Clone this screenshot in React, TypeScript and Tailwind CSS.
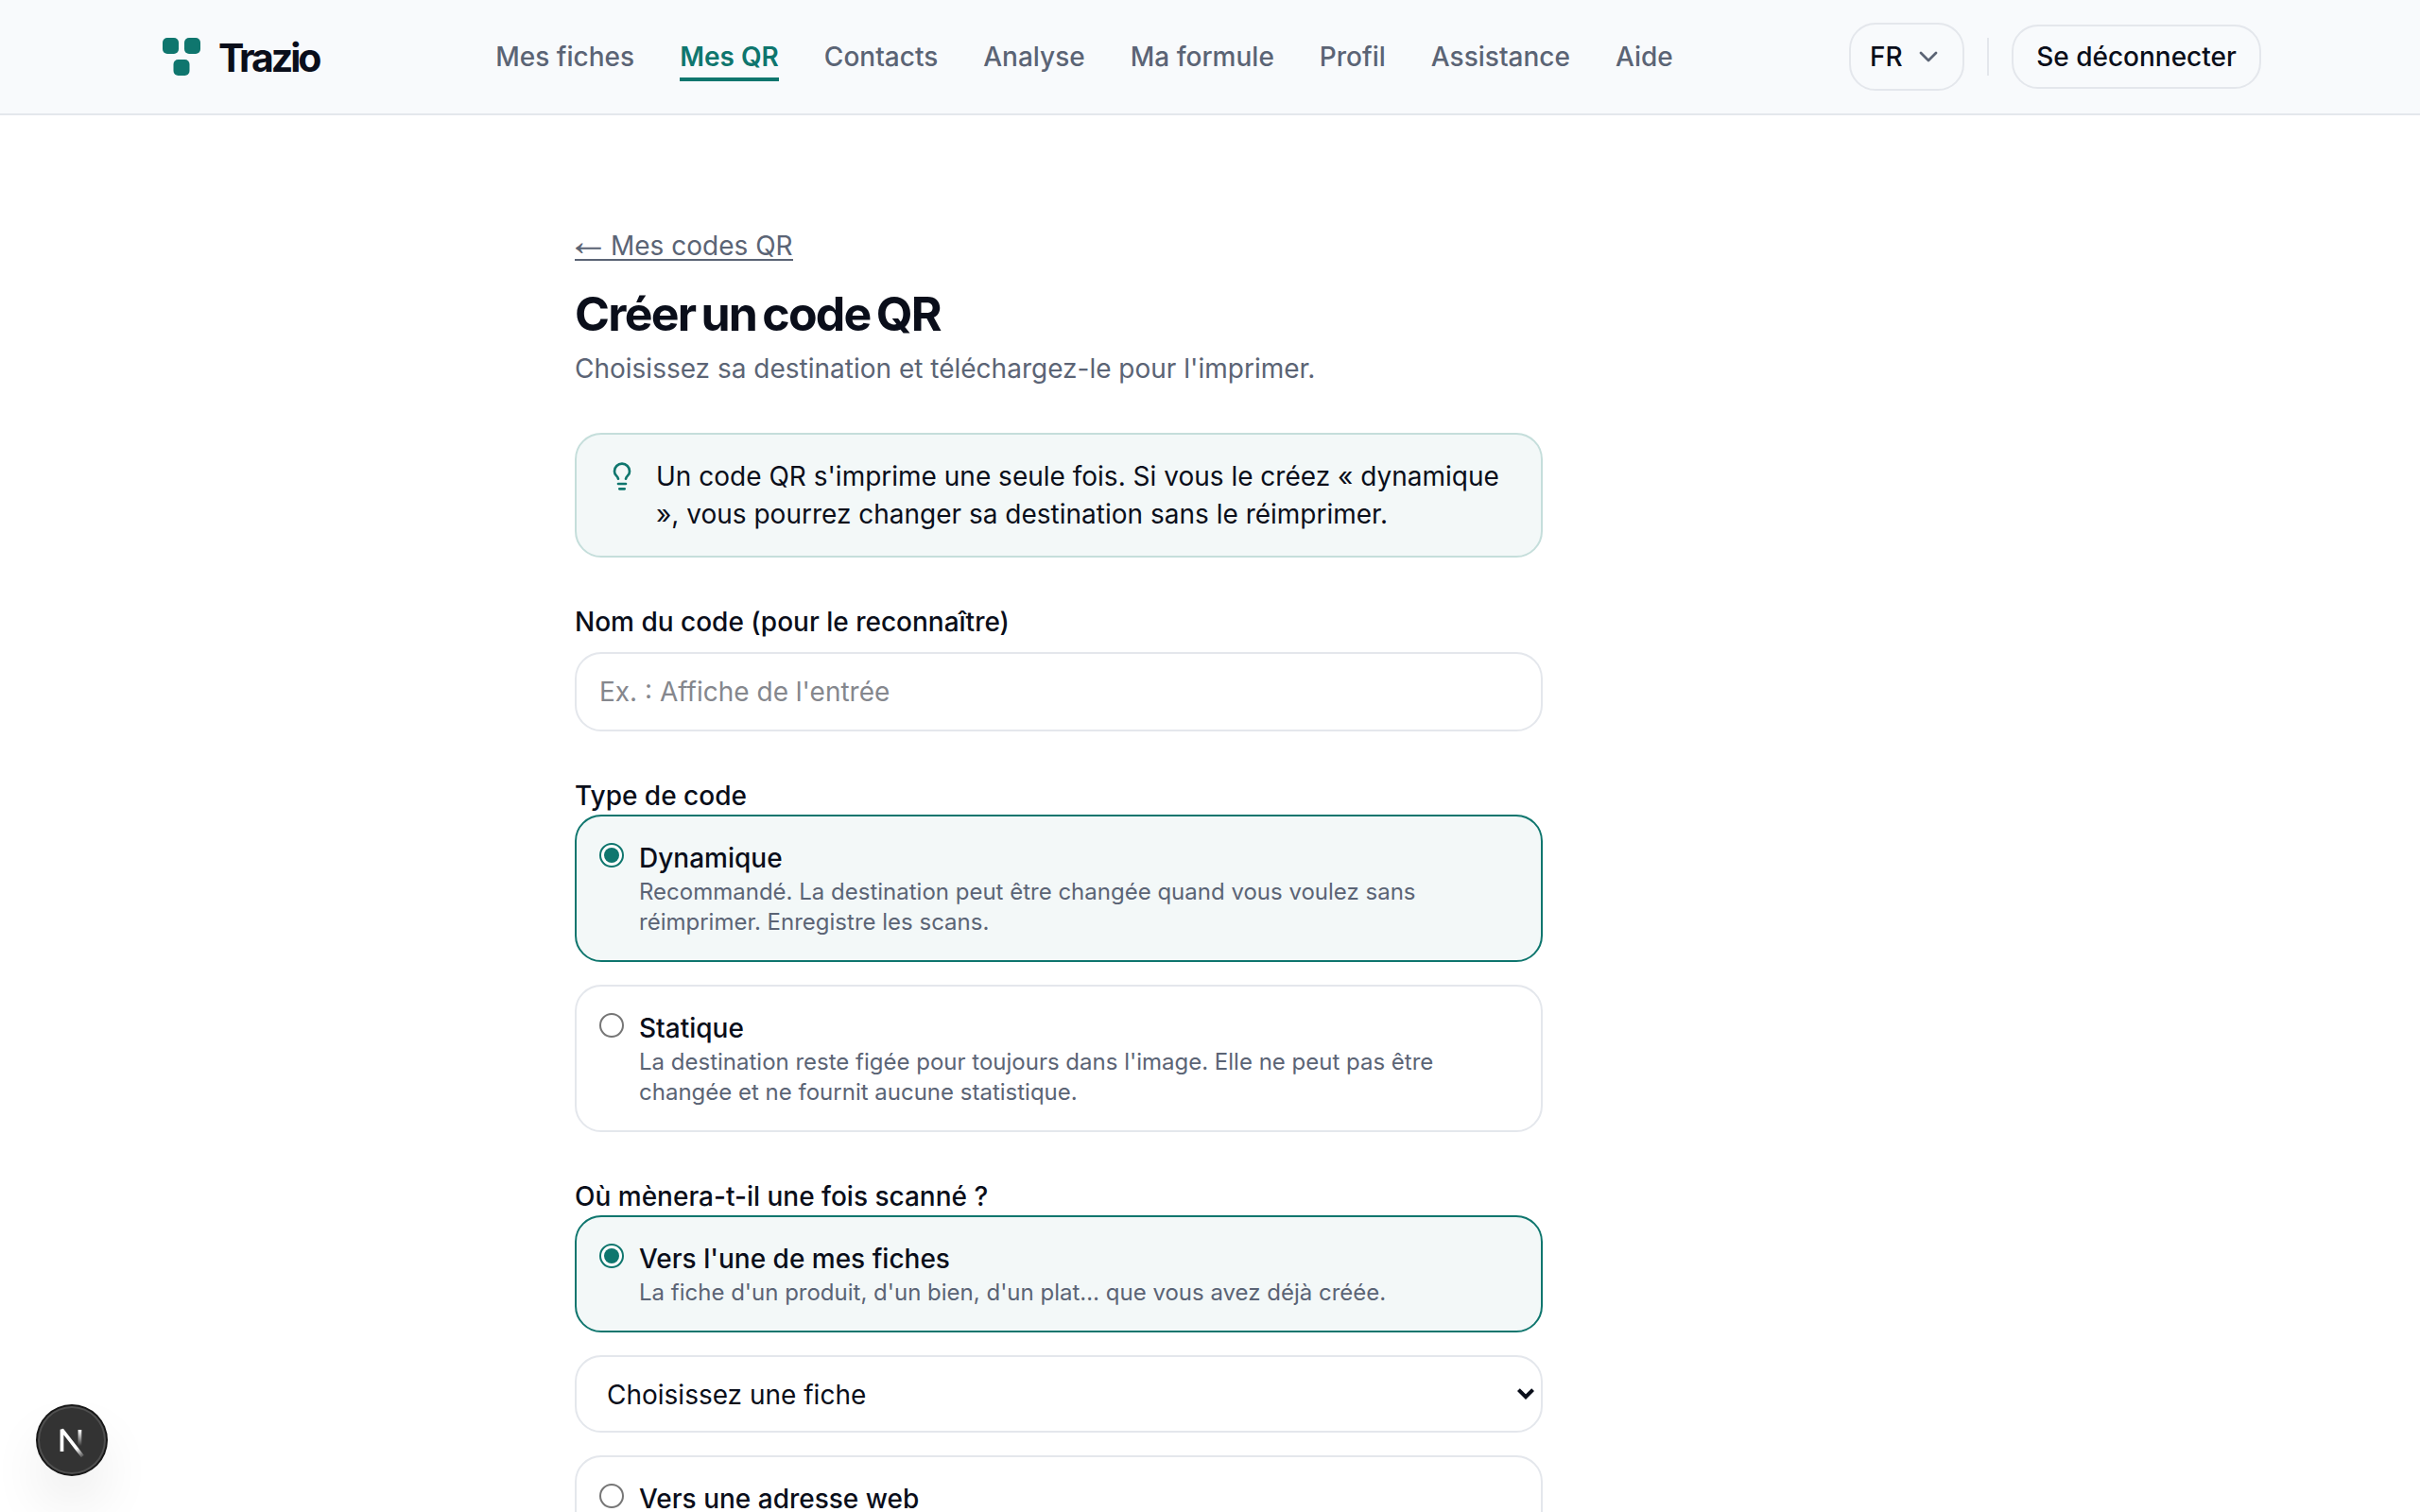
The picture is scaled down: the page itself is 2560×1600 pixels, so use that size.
import React from "react";
import { ChevronDown, Lightbulb } from "lucide-react";

const navItems = [
  "Mes fiches",
  "Mes QR",
  "Contacts",
  "Analyse",
  "Ma formule",
  "Profil",
  "Assistance",
  "Aide",
];

function Logo() {
  return (
    <a className="flex w-[170px] items-center gap-[15px]">
      <svg viewBox="0 0 48 48" className="h-12 w-12 shrink-0" fill="#0f766e">
        <rect x="4" y="4" width="17" height="17" rx="5" />
        <rect x="27" y="4" width="17" height="17" rx="5" />
        <rect x="15.5" y="27" width="17" height="17" rx="5" />
      </svg>
      <span className="pt-0.5 text-[41px] leading-[56px] font-bold tracking-[-0.075em]">Trazio</span>
    </a>
  );
}

function Header() {
  return (
    <header className="h-[122px] border-b-2 border-[#e4e7ec] bg-[#f8fafc]">
      <div className="mx-auto flex h-full w-[2224px] items-center justify-between">
        <Logo />
        <nav className="flex items-center gap-12">
          {navItems.map((item) => (
            <a
              key={item}
              className={
                item === "Mes QR"
                  ? "border-y-4 border-t-transparent border-b-[#0f766e] py-0.5 font-semibold text-[#0f766e]"
                  : "font-medium text-[#5b6475]"
              }
            >
              {item}
            </a>
          ))}
        </nav>
        <div className="flex items-center gap-6">
          <button className="flex h-[72px] w-[122px] items-center justify-between rounded-[28px] border-2 border-[#e4e7ec] px-5 font-medium">
            FR
            <ChevronDown size={32} strokeWidth={2} className="text-[#5b6475]" />
          </button>
          <div className="h-10 w-0.5 bg-[#e4e7ec]" />
          <button className="h-[68px] w-[264px] rounded-[28px] border-2 border-[#e4e7ec] font-medium whitespace-nowrap">
            Se déconnecter
          </button>
        </div>
      </div>
    </header>
  );
}

function Radio({ checked }: { checked?: boolean }) {
  return (
    <span
      className={
        checked
          ? "mt-1 flex h-[26px] w-[26px] shrink-0 items-center justify-center rounded-full border-2 border-[#0f766e] bg-white"
          : "mt-1 flex h-[26px] w-[26px] shrink-0 rounded-full border-2 border-[#767676] bg-white"
      }
    >
      {checked && <span className="h-4 w-4 rounded-full bg-[#0f766e]" />}
    </span>
  );
}

function Option({
  title,
  checked,
  children,
}: {
  title: string;
  checked?: boolean;
  children?: React.ReactNode;
}) {
  return (
    <label
      className={
        checked
          ? "flex gap-4 rounded-[28px] border-2 border-[#0f766e] bg-[#f3f8f8] p-6"
          : "flex gap-4 rounded-[28px] border-2 border-[#e4e7ec] bg-white p-6"
      }
    >
      <Radio checked={checked} />
      <span className="flex flex-col whitespace-nowrap">
        <span className="font-medium">{title}</span>
        {children && <span className="text-[24px] leading-[32px] text-[#5b6475]">{children}</span>}
      </span>
    </label>
  );
}

function DevBadge() {
  return (
    <div className="fixed bottom-10 left-10 flex h-[72px] w-[72px] items-center justify-center rounded-full bg-[#333333] shadow-[0_0_0_2px_#171717,inset_0_0_0_2px_rgba(255,255,255,0.14),0_32px_64px_-16px_rgba(0,0,0,0.24)]">
      <svg viewBox="0 0 40 40" className="h-20 w-20 shrink-0" fill="none">
        <g transform="translate(12.4,13.4)" strokeWidth="1.86">
          <path d="M13.3 15.2 L2.34 1 V12.6" stroke="url(#diag)" strokeLinejoin="bevel" />
          <path d="M11.825 1.1 V13.1" stroke="url(#stem)" />
        </g>
        <defs>
          <linearGradient id="diag" x1="9.95" y1="11.12" x2="13.9" y2="16" gradientUnits="userSpaceOnUse">
            <stop stopColor="#fff" />
            <stop offset="1" stopColor="#fff" stopOpacity="0" />
          </linearGradient>
          <linearGradient id="stem" x1="11.82" y1="1.4" x2="11.79" y2="9.63" gradientUnits="userSpaceOnUse">
            <stop stopColor="#fff" />
            <stop offset="1" stopColor="#fff" stopOpacity="0" />
          </linearGradient>
        </defs>
      </svg>
    </div>
  );
}

export default function App() {
  return (
    <div className="h-[1600px] w-[2560px] overflow-hidden bg-white font-['Inter',sans-serif] text-[28px] leading-[40px] text-[#0a0e1a] [font-optical-sizing:none]">
      <Header />
      <main className="mx-auto w-[1344px] pt-[118px]">
        <div className="flex w-[1024px] flex-col">
          <a className="flex h-9 items-baseline self-start border-b-2 border-[#5b6475] text-[#5b6475]">
            <span className="-mr-[7px] -ml-2 font-['Liberation_Serif',serif] text-[45px] leading-[20px]">←</span>
            <span className="pl-2">Mes codes QR</span>
          </a>
          <h1 className="mt-6 text-[50px] leading-[64px] font-bold tracking-[-0.035em] [word-spacing:-4px]">
            Créer un code QR
          </h1>
          <p className="mt-1.5 text-[#5b6475]">
            Choisissez sa destination et téléchargez-le pour l'imprimer.
          </p>

          <div className="mt-12 flex gap-5 rounded-[28px] border-2 border-[#c5dedb] bg-[#f3f8f8] px-8 py-6">
            <Lightbulb size={32} strokeWidth={2} className="mt-1 shrink-0 text-[#0f766e]" />
            <p className="whitespace-nowrap">
              Un code QR s'imprime une seule fois. Si vous le créez « dynamique
              <br />
              », vous pourrez changer sa destination sans le réimprimer.
            </p>
          </div>

          <label className="mt-12 font-medium">Nom du code (pour le reconnaître)</label>
          <input
            className="mt-3 h-[84px] rounded-[28px] border-2 border-[#e4e7ec] px-6 placeholder:text-[#85878d]"
            placeholder="Ex. : Affiche de l'entrée"
          />

          <div className="mt-12 font-medium">Type de code</div>
          <div className="flex flex-col gap-6">
            <Option title="Dynamique" checked>
              Recommandé. La destination peut être changée quand vous voulez sans
              <br />
              réimprimer. Enregistre les scans.
            </Option>
            <Option title="Statique">
              La destination reste figée pour toujours dans l'image. Elle ne peut pas être
              <br />
              changée et ne fournit aucune statistique.
            </Option>
          </div>

          <div className="mt-12 font-medium">Où mènera-t-il une fois scanné ?</div>
          <div className="flex flex-col gap-6">
            <Option title="Vers l'une de mes fiches" checked>
              La fiche d'un produit, d'un bien, d'un plat… que vous avez déjà créée.
            </Option>
            <div className="flex h-[82px] items-center justify-between rounded-[28px] border-2 border-[#e4e7ec] pr-[7px] pl-8">
              <span className="pt-0.5">Choisissez une fiche</span>
              <svg viewBox="0 0 18 12" className="h-3 w-[18px]" fill="none" stroke="#0a0e1a" strokeWidth="4">
                <path d="M1.4 1.6 L9 9.2 L16.6 1.6" />
              </svg>
            </div>
            <Option title="Vers une adresse web" />
          </div>
        </div>
      </main>
      <DevBadge />
    </div>
  );
}
